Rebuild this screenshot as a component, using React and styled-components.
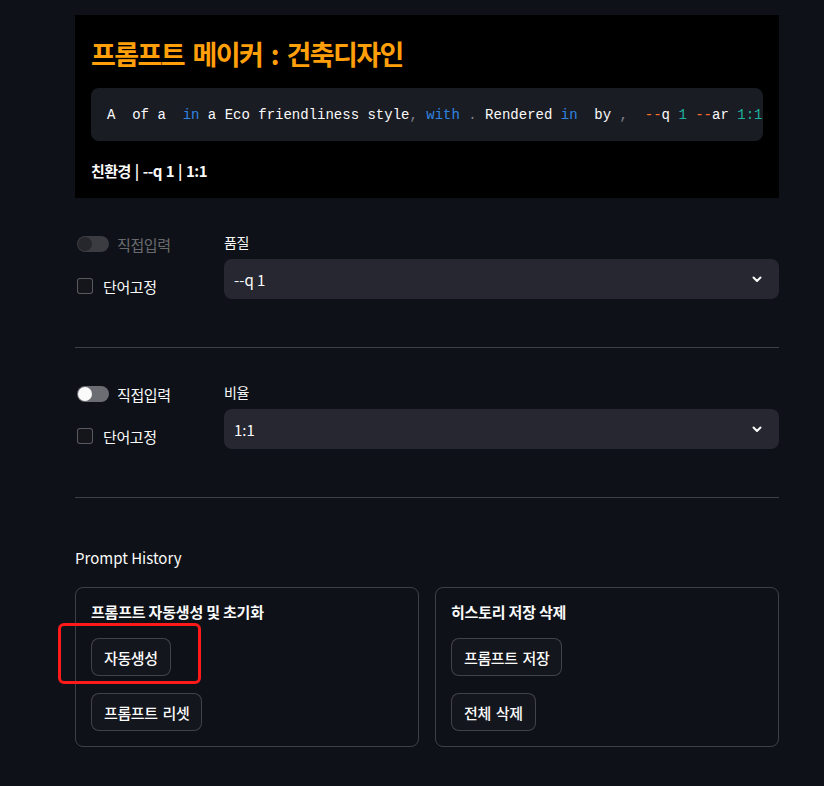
import React from 'react'
import styled, { createGlobalStyle } from 'styled-components'

const GlobalStyle = createGlobalStyle`
body {
  margin: 0;
  background: #0e1117;
  color: #fafafa;
  font-family: "Noto Sans CJK KR", "Noto Sans", sans-serif;
}
`
const Page = styled.div`
width: 704px;
padding: 15px 45px 40px 75px;
`
const Hero = styled.div`
background: #000;
padding: 22px 16px 15px;
`
const Title = styled.h1`
margin: 0 0 17px;
font-size: 27px;
line-height: 34px;
font-weight: 700;
letter-spacing: -1.6px;
word-spacing: 4px;
color: #ff9f0a;
`
const Code = styled.pre`
margin: 0;
background: #1a1c24;
border-radius: 8px;
padding: 17px 16px 15px;
overflow: hidden;
white-space: pre;
font-family: "Liberation Mono", "DejaVu Sans Mono", monospace;
font-size: 14px;
line-height: 21px;
color: #fafafa;
`
const Tok = styled.span`
color: ${p => ({ kw: '#2f84e0', op: '#ff7129', num: '#1fb19f', punc: '#7d818b' }[p.$t] || '#fafafa')};
`
const Caption = styled.div`
margin-top: 18px;
font-size: 15px;
line-height: 24px;
font-weight: 600;
letter-spacing: -0.5px;
word-spacing: 1px;
`
const Row = styled.div`
display: grid;
grid-template-columns: 133px 1fr;
gap: 16px;
margin-top: 34px;
`
const Left = styled.div`
display: flex;
flex-direction: column;
gap: 18px;
padding-left: 2px;
`
const Line = styled.label`
display: flex;
align-items: center;
height: 24px;
gap: ${p => p.$gap || 8}px;
font-size: 15px;
letter-spacing: -0.4px;
color: ${p => (p.$disabled ? 'rgba(250,250,250,0.4)' : '#fafafa')};
`
const Track = styled.span`
position: relative;
width: 32px;
height: 16px;
border-radius: 8px;
background: ${p => (p.$disabled ? '#3b3c42' : '#6c6d73')};
`
const Knob = styled.span`
position: absolute;
left: 1px;
top: 1px;
width: 14px;
height: 14px;
border-radius: 50%;
background: ${p => (p.$disabled ? '#26272c' : '#fafafa')};
`
const Box = styled.span`
width: 14px;
height: 14px;
border: 1px solid rgba(250,250,250,0.3);
border-radius: 3px;
background: #14161c;
`
const Field = styled.div`
display: flex;
flex-direction: column;
`
const Label = styled.div`
font-size: 14px;
line-height: 20px;
margin-bottom: 7px;
letter-spacing: -0.3px;
`
const Select = styled.div`
display: flex;
align-items: center;
justify-content: space-between;
height: 40px;
padding: 0 16px 0 10px;
border-radius: 8px;
background: #262730;
font-size: 15px;
`
const Divider = styled.hr`
margin: 48px 0 0;
border: none;
border-top: 1px solid rgba(250,250,250,0.2);
`
const Heading = styled.div`
margin-top: 49px;
font-size: 15px;
line-height: 22px;
`
const Cards = styled.div`
display: grid;
grid-template-columns: 1fr 1fr;
gap: 16px;
margin-top: 18px;
`
const Card = styled.div`
display: flex;
flex-direction: column;
align-items: flex-start;
gap: 17px;
padding: 15px;
border: 1px solid rgba(250,250,250,0.2);
border-radius: 8px;
`
const CardTitle = styled.div`
font-size: 15px;
line-height: 18px;
font-weight: 700;
letter-spacing: -0.2px;
`
const Button = styled.button`
height: 38px;
padding: 0 12px;
border: 1px solid rgba(250,250,250,0.2);
border-radius: 8px;
background: #13161d;
color: #fafafa;
font-family: inherit;
font-size: 15px;
font-weight: 500;
letter-spacing: -0.4px;
word-spacing: 2px;
`
const Mark = styled.span`
position: relative;
&::after {
  content: '';
  position: absolute;
  left: -33px;
  top: -15px;
  width: 137px;
  height: 55px;
  border: 3px solid #ff1a1a;
  border-radius: 6px;
}
`

const Chevron = () => (
  <svg width="12" height="12" viewBox="0 0 12 12" fill="none" stroke="#fafafa" strokeWidth="2" strokeLinecap="round" strokeLinejoin="round">
    <path d="M2.5 4.5 6 8l3.5-3.5" />
  </svg>
)

const Setting = ({ disabled, label, value }) => (
  <Row>
    <Left>
      <Line $disabled={disabled}>
        <Track $disabled={disabled}><Knob $disabled={disabled} /></Track>
        직접입력
      </Line>
      <Line $gap={10}>
        <Box />
        단어고정
      </Line>
    </Left>
    <Field>
      <Label>{label}</Label>
      <Select>{value}<Chevron /></Select>
    </Field>
  </Row>
)

const App = () => (
  <>
    <GlobalStyle />
    <Page>
      <Hero>
        <Title>프롬프트 메이커 : 건축디자인</Title>
        <Code>
          A  of a  <Tok $t="kw">in</Tok> a Eco friendliness style<Tok $t="punc">,</Tok> <Tok $t="kw">with</Tok> <Tok $t="punc">.</Tok> Rendered <Tok $t="kw">in</Tok>  by <Tok $t="punc">,</Tok>  <Tok $t="op">--</Tok>q <Tok $t="num">1</Tok> <Tok $t="op">--</Tok>ar <Tok $t="num">1:1</Tok>
        </Code>
        <Caption>친환경 | --q 1 | 1:1</Caption>
      </Hero>
      <Setting disabled label="품질" value="--q 1" />
      <Divider />
      <Setting label="비율" value="1:1" />
      <Divider />
      <Heading>Prompt History</Heading>
      <Cards>
        <Card>
          <CardTitle>프롬프트 자동생성 및 초기화</CardTitle>
          <Mark><Button>자동생성</Button></Mark>
          <Button>프롬프트 리셋</Button>
        </Card>
        <Card>
          <CardTitle>히스토리 저장 삭제</CardTitle>
          <Button>프롬프트 저장</Button>
          <Button>전체 삭제</Button>
        </Card>
      </Cards>
    </Page>
  </>
)

export default App
